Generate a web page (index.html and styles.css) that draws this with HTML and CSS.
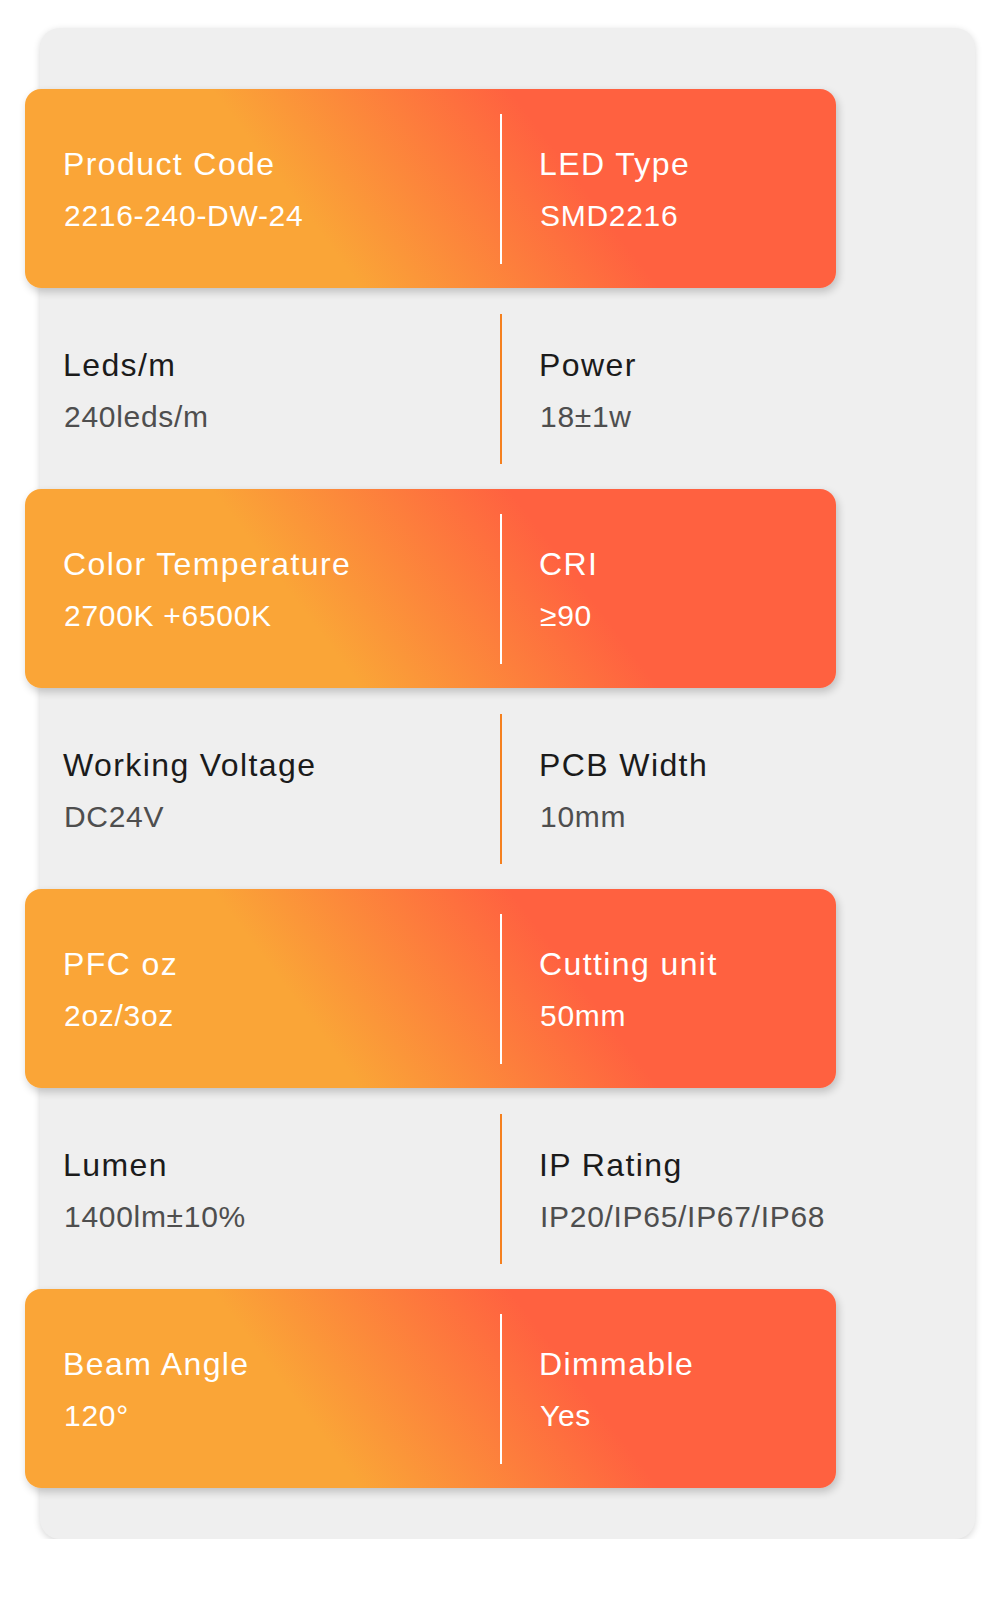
FILE: index.html
```html
<!DOCTYPE html>
<html lang="en">
<head>
<meta charset="utf-8">
<title>Specifications</title>
<link rel="stylesheet" href="styles.css">
</head>
<body>
<div class="card">
  <div class="row band">
    <div class="cell left"><div class="label">Product Code</div><div class="value">2216-240-DW-24</div></div>
    <div class="divider"></div>
    <div class="cell right"><div class="label">LED Type</div><div class="value">SMD2216</div></div>
  </div>
  <div class="row plain">
    <div class="cell left"><div class="label">Leds/m</div><div class="value">240leds/m</div></div>
    <div class="divider"></div>
    <div class="cell right"><div class="label">Power</div><div class="value">18±1w</div></div>
  </div>
  <div class="row band">
    <div class="cell left"><div class="label">Color Temperature</div><div class="value">2700K +6500K</div></div>
    <div class="divider"></div>
    <div class="cell right"><div class="label">CRI</div><div class="value">≥90</div></div>
  </div>
  <div class="row plain">
    <div class="cell left"><div class="label">Working Voltage</div><div class="value">DC24V</div></div>
    <div class="divider"></div>
    <div class="cell right"><div class="label">PCB Width</div><div class="value">10mm</div></div>
  </div>
  <div class="row band">
    <div class="cell left"><div class="label">PFC oz</div><div class="value">2oz/3oz</div></div>
    <div class="divider"></div>
    <div class="cell right"><div class="label">Cutting unit</div><div class="value">50mm</div></div>
  </div>
  <div class="row plain">
    <div class="cell left"><div class="label">Lumen</div><div class="value">1400lm±10%</div></div>
    <div class="divider"></div>
    <div class="cell right"><div class="label">IP Rating</div><div class="value">IP20/IP65/IP67/IP68</div></div>
  </div>
  <div class="row band">
    <div class="cell left"><div class="label">Beam Angle</div><div class="value">120°</div></div>
    <div class="divider"></div>
    <div class="cell right"><div class="label">Dimmable</div><div class="value">Yes</div></div>
  </div>
</div>
</body>
</html>
```
FILE: styles.css
```css
html, body {
  margin: 0;
  padding: 0;
  background: #ffffff;
}

body {
  font-family: "Liberation Sans", Arial, Helvetica, sans-serif;
  padding-top: 28px;
  padding-left: 40px;
}

.card {
  box-sizing: border-box;
  width: 935px;
  height: 1511px;
  background: #efefef;
  border-radius: 20px;
  box-shadow: 0 2px 7px rgba(0, 0, 0, 0.16);
  padding-top: 61px;
  padding-bottom: 50px;
}

.row {
  margin-left: -15px;
  width: 811px;
  height: 200px;
  box-sizing: border-box;
  display: grid;
  grid-template-columns: 475px 2px 1fr;
  align-items: center;
}

.band {
  height: 199px;
  margin-bottom: 1px;
  border-radius: 16px;
  background: linear-gradient(53deg, #faa537 0%, #faa537 35%, #ff6140 66%, #ff6140 100%);
  box-shadow: 2px 4px 8px rgba(0, 0, 0, 0.2);
  color: #ffffff;
}

.plain {
  color: #1b1b1b;
}

.divider {
  height: 150px;
  width: 2px;
}

.band .divider {
  background: #ffffff;
  width: 1.5px;
}

.plain .divider {
  background: #f5801f;
}

.cell {
  display: flex;
  flex-direction: column;
  justify-content: center;
  padding-top: 3px;
  height: 100%;
  box-sizing: border-box;
}

.left {
  padding-left: 38px;
}

.right {
  padding-left: 37px;
}

.label {
  font-size: 32px;
  line-height: 52px;
  letter-spacing: 1.4px;
  white-space: nowrap;
}

.value {
  font-size: 30px;
  line-height: 52px;
  letter-spacing: 0.7px;
  padding-left: 1px;
  white-space: nowrap;
}

.plain .value {
  color: #4e4e4e;
}
```
